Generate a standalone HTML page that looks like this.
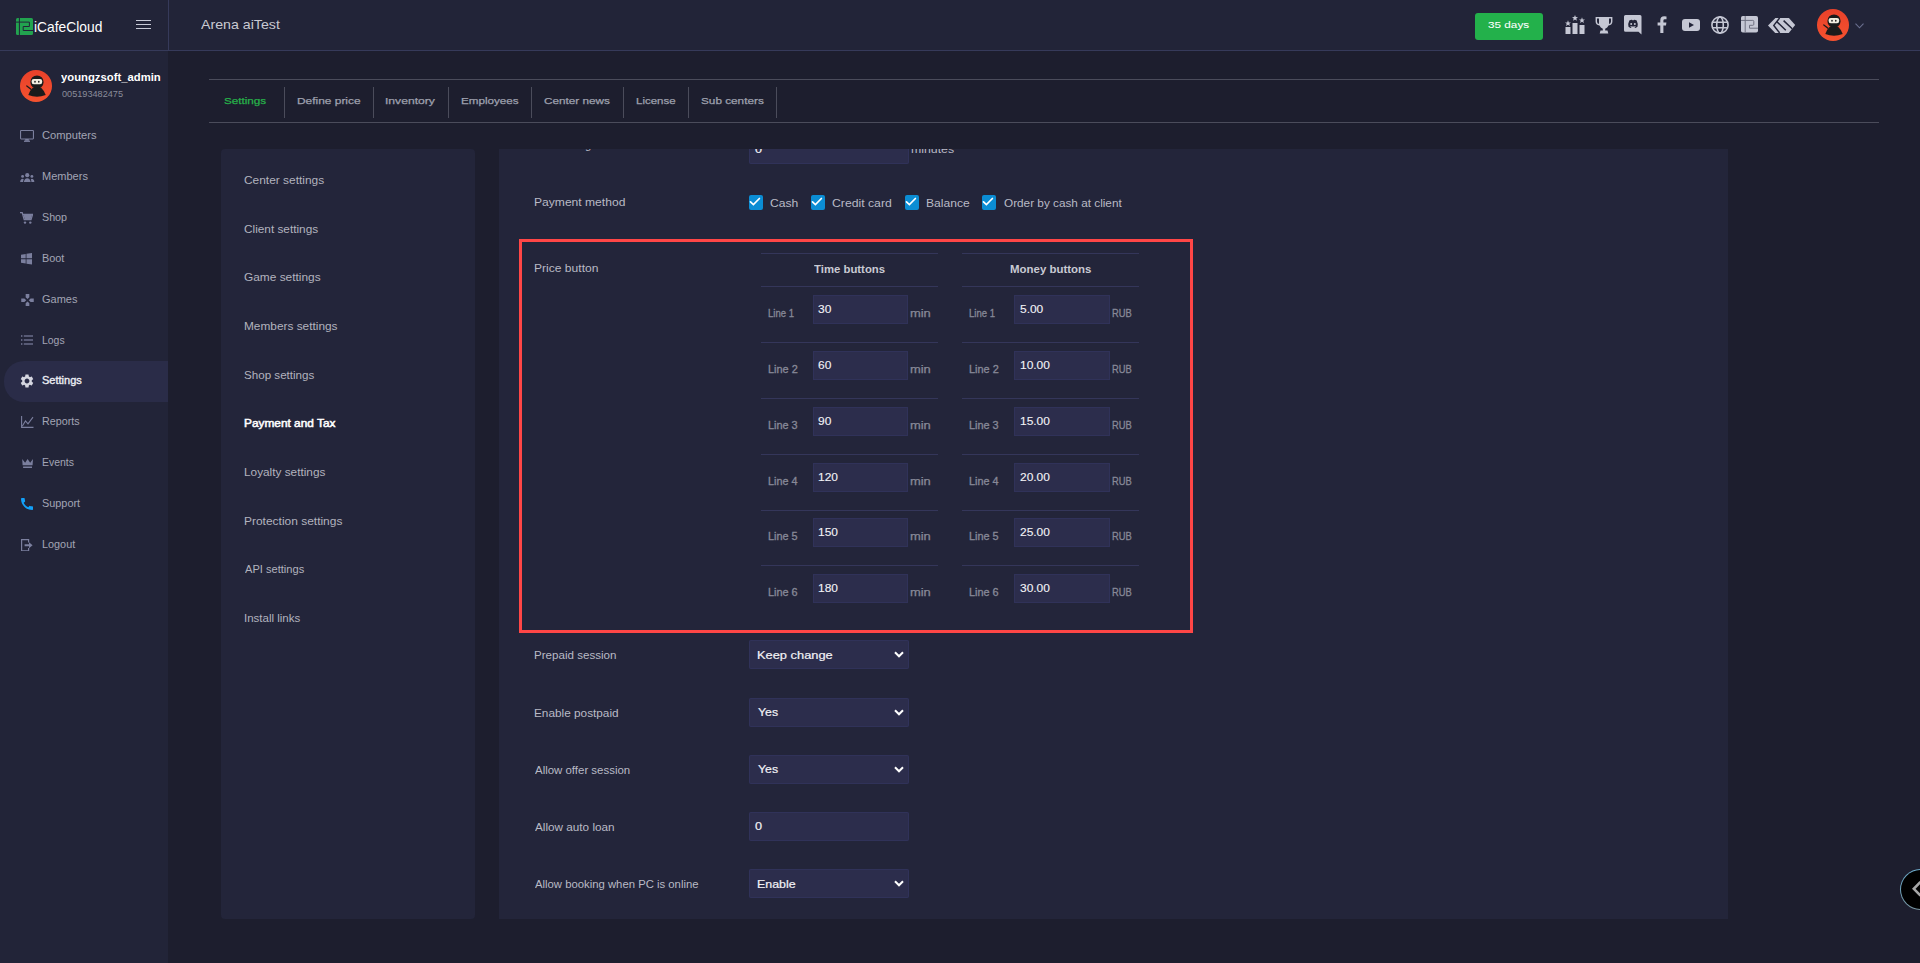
<!DOCTYPE html>
<html><head><meta charset="utf-8">
<style>
*{box-sizing:border-box;margin:0;padding:0}
html,body{width:1920px;height:963px;overflow:hidden}
body{background:#1d1e2e;font-family:"Liberation Sans",sans-serif;position:relative}
.a{position:absolute}
.t{position:absolute;white-space:nowrap;line-height:1}
.inp{position:absolute;background:#2c2d4c;border-radius:2px;box-shadow:inset 0 0 0 1px #303259}
.hl{position:absolute;height:1px;background:#34365a}
.cb{position:absolute;width:14px;height:15px;background:#0b8dd4;border-radius:2px}
</style></head><body>
<div class="a" style="left:0;top:0;width:1920px;height:50px;background:#222438"></div>
<div class="a" style="left:0;top:50px;width:1920px;height:1px;background:#363a5a"></div>
<div class="a" style="left:168px;top:0;width:1px;height:50px;background:#363a5a"></div>
<svg class="a" style="left:16px;top:18px" width="17" height="17" viewBox="0 0 17 17">
<rect x="0" y="0" width="17" height="17" rx="1.5" fill="#22a34f"/>
<path d="M3.4 0 V17" stroke="#222438" stroke-width="1"/>
<path d="M0 4.1 H13.4 V8.5 H7.2 V12.5 H17" stroke="#222438" stroke-width="1" fill="none"/>
</svg>
<div class="t" style="left:34.47px;top:20.00px;font-size:14.4px;color:#ffffff;font-weight:normal;transform:scaleX(0.9600);transform-origin:0 0;">iCafeCloud</div>
<div class="a" style="left:136px;top:19.5px;width:15px;height:1.7px;background:#c8cad6"></div>
<div class="a" style="left:136px;top:23.6px;width:15px;height:1.7px;background:#c8cad6"></div>
<div class="a" style="left:136px;top:27.6px;width:15px;height:1.7px;background:#c8cad6"></div>
<div class="t" style="left:201.16px;top:18.00px;font-size:13.4px;color:#c9cad2;font-weight:normal;transform:scaleX(1.0600);transform-origin:0 0;">Arena aiTest</div>
<div class="a" style="left:1475px;top:13px;width:68px;height:27px;background:#23b14b;border-radius:3px"></div>
<div class="t" style="left:1488.16px;top:20.00px;font-size:9.6px;color:#ffffff;font-weight:normal;transform:scaleX(1.2239);transform-origin:0 0;-webkit-text-stroke:0.05px #ffffff;">35 days</div>
<svg class="a" style="left:1565px;top:15px" width="20" height="19" viewBox="0 0 20 19"><rect x="0.5" y="12" width="5" height="7" fill="#c5c7d4"/><rect x="7.5" y="8" width="5" height="11" fill="#c5c7d4"/><rect x="14.5" y="10" width="5" height="9" fill="#c5c7d4"/><path d="M3 5.3 L3.8 7.4 L6 7.5 L4.3 8.8 L4.9 11 L3 9.8 L1.1 11 L1.7 8.8 L0 7.5 L2.2 7.4 Z" fill="#c5c7d4"/><path d="M10 0 L10.8 2.1 L13 2.2 L11.3 3.5 L11.9 5.7 L10 4.5 L8.1 5.7 L8.7 3.5 L7 2.2 L9.2 2.1 Z" fill="#c5c7d4"/><path d="M17 2.3 L17.8 4.4 L20 4.5 L18.3 5.8 L18.9 8 L17 6.8 L15.1 8 L15.7 5.8 L14 4.5 L16.2 4.4 Z" fill="#c5c7d4"/></svg>
<svg class="a" style="left:1595px;top:15.5px" width="18" height="18" viewBox="0 0 18 18"><path d="M0.6 1 H17.4 V5.5 Q17.4 9 13.5 9.6 Q12.5 12 10.2 12.7 V14.6 H12.5 L13.3 17.5 H4.7 L5.5 14.6 H7.8 V12.7 Q5.5 12 4.5 9.6 Q0.6 9 0.6 5.5 Z" fill="#c5c7d4"/><path d="M2 2.5 V5.5 Q2 7.5 4 8 V2.5 Z M16 2.5 V5.5 Q16 7.5 14 8 V2.5 Z" fill="#222438"/></svg>
<svg class="a" style="left:1624px;top:15px" width="18" height="20" viewBox="0 0 18 20"><path d="M1.5 0 H16 Q17.5 0 17.5 1.5 V19.5 L14.5 16.8 H1.5 Q0 16.8 0 15.3 V1.5 Q0 0 1.5 0 Z" fill="#c5c7d4"/><path d="M4.5 11.8 Q3.8 8.5 5.3 5.6 Q6.8 4.7 8 4.8 L8.3 5.3 Q9 5.1 9.7 5.3 L10 4.8 Q11.2 4.7 12.7 5.6 Q14.2 8.5 13.5 11.8 Q12.3 12.7 11.1 12.9 L10.5 12 Q11.3 11.7 11.8 11.3 L11.4 11 Q9 12 6.6 11 L6.2 11.3 Q6.7 11.7 7.5 12 L6.9 12.9 Q5.7 12.7 4.5 11.8 Z" fill="#222438"/><ellipse cx="7.2" cy="9" rx="1" ry="1.1" fill="#c5c7d4"/><ellipse cx="10.8" cy="9" rx="1" ry="1.1" fill="#c5c7d4"/></svg>
<svg class="a" style="left:1657px;top:16px" width="10" height="17" viewBox="0 0 10 17"><path d="M6.4 17 V9.4 H9 L9.4 6.4 H6.4 V4.6 Q6.4 3.2 7.8 3.2 H9.5 V0.4 Q8.6 0.2 7.2 0.2 Q3.3 0.2 3.3 4.2 V6.4 H0.6 V9.4 H3.3 V17 Z" fill="#c5c7d4"/></svg>
<svg class="a" style="left:1682px;top:18.5px" width="18" height="12" viewBox="0 0 18 12"><rect x="0" y="0" width="18" height="12" rx="3" fill="#c5c7d4"/><path d="M7 3.3 L12 6 L7 8.7 Z" fill="#222438"/></svg>
<svg class="a" style="left:1711px;top:15.5px" width="18" height="18" viewBox="0 0 18 18" fill="none" stroke="#c5c7d4" stroke-width="1.6"><circle cx="9" cy="9" r="8.1"/><ellipse cx="9" cy="9" rx="3.3" ry="8.1"/><path d="M1.2 6.3 H16.8 M1.2 11.7 H16.8"/></svg>
<svg class="a" style="left:1740.5px;top:16.4px" width="17" height="16.5" viewBox="0 0 17 16.5"><rect x="0" y="0" width="17" height="16.5" rx="1.8" fill="#c5c7d4"/><path d="M4.2 0 V16.5" stroke="#6e7080" stroke-width="1"/><path d="M0 4.4 H11.8 Q12.8 4.4 12.8 5.4 V8.3 Q12.8 9.3 11.8 9.3 H8.5 V12.2 H17" stroke="#6e7080" stroke-width="1" fill="none"/></svg>
<svg class="a" style="left:1768.4px;top:17.8px" width="27.5" height="15.4" viewBox="0 0 27.5 15.4"><path d="M0 7.5 L7.4 0 H20.9 L27.2 7 L20.6 15.2 H7.4 Z" fill="#c5c7d4"/><path d="M11.6 0 L5.8 7.4 L11.6 14.9 M8.8 3.6 L17.8 12.3 M15.6 2.6 L24.2 10.7" stroke="#222438" stroke-width="1.5" fill="none"/></svg>
<svg class="a" style="left:1817px;top:9px" width="32" height="32" viewBox="0 0 32 32">
<defs><linearGradient id="ng1817" x1="0" y1="0" x2="0" y2="1"><stop offset="0" stop-color="#e9412a"/><stop offset="1" stop-color="#f5522f"/></linearGradient></defs>
<circle cx="16" cy="16" r="16" fill="url(#ng1817)"/>
<path d="M8.3 25 Q9.8 20.2 13 17.4 L21 17.4 Q24 20.2 25.7 25 Q17 28.5 8.3 25 Z" fill="#1b1b1b"/>
<circle cx="17" cy="12" r="6.6" fill="#1b1b1b"/>
<rect x="11.6" y="8.9" width="10.6" height="5.4" rx="2.2" fill="#f3eee0"/>
<ellipse cx="15" cy="11.7" rx="0.8" ry="1" fill="#1b1b1b"/><ellipse cx="18.8" cy="11.7" rx="0.8" ry="1" fill="#1b1b1b"/>
<path d="M6.8 15.9 L11 19.3" stroke="#1b1b1b" stroke-width="1.3" stroke-linecap="round"/>
</svg>
<svg class="a" style="left:1855px;top:22.5px" width="9" height="6" viewBox="0 0 9 6"><path d="M0.5 0.7 L4.5 4.8 L8.5 0.7" stroke="#6b7090" stroke-width="1.1" fill="none"/></svg>
<div class="a" style="left:0;top:51px;width:168px;height:912px;background:#222438"></div>
<svg class="a" style="left:20px;top:70px" width="32" height="32" viewBox="0 0 32 32">
<defs><linearGradient id="ng20" x1="0" y1="0" x2="0" y2="1"><stop offset="0" stop-color="#e9412a"/><stop offset="1" stop-color="#f5522f"/></linearGradient></defs>
<circle cx="16" cy="16" r="16" fill="url(#ng20)"/>
<path d="M8.3 25 Q9.8 20.2 13 17.4 L21 17.4 Q24 20.2 25.7 25 Q17 28.5 8.3 25 Z" fill="#1b1b1b"/>
<circle cx="17" cy="12" r="6.6" fill="#1b1b1b"/>
<rect x="11.6" y="8.9" width="10.6" height="5.4" rx="2.2" fill="#f3eee0"/>
<ellipse cx="15" cy="11.7" rx="0.8" ry="1" fill="#1b1b1b"/><ellipse cx="18.8" cy="11.7" rx="0.8" ry="1" fill="#1b1b1b"/>
<path d="M6.8 15.9 L11 19.3" stroke="#1b1b1b" stroke-width="1.3" stroke-linecap="round"/>
</svg>
<div class="t" style="left:61.17px;top:72.00px;font-size:11.2px;color:#ffffff;font-weight:bold;transform:scaleX(1.0090);transform-origin:0 0;">youngzsoft_admin</div>
<div class="t" style="left:61.53px;top:89.00px;font-size:9.7px;color:#8a8c9a;font-weight:normal;transform:scaleX(0.9430);transform-origin:0 0;">005193482475</div>
<div class="a" style="left:4px;top:361px;width:164px;height:40.5px;background:#2a2c48;border-radius:20px 0 0 20px"></div>
<div class="t" style="left:42.34px;top:130.00px;font-size:10.5px;color:#a3a5b5;font-weight:normal;transform:scaleX(1.0624);transform-origin:0 0;">Computers</div>
<svg class="a" style="left:20px;top:130px" width="14" height="12" viewBox="0 0 14 12"><rect x="0.55" y="0.55" width="12.9" height="8.4" rx="0.6" stroke="#7b7f9e" stroke-width="1.1" fill="none"/><path d="M5.3 9 L5 10.7 H9 L8.7 9 Z" fill="#7b7f9e"/><rect x="4" y="10.6" width="6" height="1.3" fill="#7b7f9e"/></svg>
<div class="t" style="left:41.99px;top:171.00px;font-size:10.5px;color:#a3a5b5;font-weight:normal;transform:scaleX(1.0488);transform-origin:0 0;">Members</div>
<svg class="a" style="left:20px;top:172.5px" width="14.5" height="9.5" viewBox="0 0 15 10"><circle cx="7.5" cy="2.3" r="2.2" fill="#7b7f9e"/><circle cx="2.6" cy="3.6" r="1.5" fill="#7b7f9e"/><circle cx="12.4" cy="3.6" r="1.5" fill="#7b7f9e"/><path d="M3.9 9.8 Q4.4 5.6 7.5 5.5 Q10.6 5.6 11.1 9.8 Z" fill="#7b7f9e"/><path d="M0 9.8 Q0.2 6.3 2.6 6.1 Q3.4 6.1 3.8 6.5 Q3.2 7.8 3.1 9.8 Z" fill="#7b7f9e"/><path d="M15 9.8 Q14.8 6.3 12.4 6.1 Q11.6 6.1 11.2 6.5 Q11.8 7.8 11.9 9.8 Z" fill="#7b7f9e"/></svg>
<div class="t" style="left:42.42px;top:212.00px;font-size:10.5px;color:#a3a5b5;font-weight:normal;transform:scaleX(1.0201);transform-origin:0 0;">Shop</div>
<svg class="a" style="left:20px;top:211.5px" width="13" height="12" viewBox="0 0 13 12"><path d="M0 0.6 H2.2 L4.2 7.7 H11 L12.6 2.4 H3" stroke="#7b7f9e" stroke-width="1.3" fill="none"/><path d="M3.4 2.6 H12.2 L10.7 7 H4.6 Z" fill="#7b7f9e"/><circle cx="5" cy="10.6" r="1.2" fill="#7b7f9e"/><circle cx="10.3" cy="10.6" r="1.2" fill="#7b7f9e"/></svg>
<div class="t" style="left:42.00px;top:253.00px;font-size:10.5px;color:#a3a5b5;font-weight:normal;transform:scaleX(1.0359);transform-origin:0 0;">Boot</div>
<svg class="a" style="left:21px;top:253px" width="11.5" height="11.5" viewBox="0 0 12 12"><path d="M0 1.8 L4.9 1 V5.6 H0 Z M5.7 0.9 L11.5 0 V5.6 H5.7 Z M0 6.4 H4.9 V11 L0 10.2 Z M5.7 6.4 H11.5 V12 L5.7 11.1 Z" fill="#7b7f9e"/></svg>
<div class="t" style="left:42.35px;top:294.00px;font-size:10.5px;color:#a3a5b5;font-weight:normal;transform:scaleX(1.0472);transform-origin:0 0;">Games</div>
<svg class="a" style="left:20.5px;top:293.5px" width="13" height="12.5" viewBox="0 0 13 13"><path d="M4.6 0 H8.4 V3.3 L6.5 5.2 L4.6 3.3 Z M4.6 13 H8.4 V9.7 L6.5 7.8 L4.6 9.7 Z M0 4.6 V8.4 H3.3 L5.2 6.5 L3.3 4.6 Z M13 4.6 V8.4 H9.7 L7.8 6.5 L9.7 4.6 Z" fill="#7b7f9e"/></svg>
<div class="t" style="left:42.04px;top:335.00px;font-size:10.5px;color:#a3a5b5;font-weight:normal;transform:scaleX(0.9942);transform-origin:0 0;">Logs</div>
<svg class="a" style="left:21px;top:334.5px" width="12" height="10" viewBox="0 0 12 10"><rect x="0" y="0.3" width="1.4" height="1.4" fill="#7b7f9e"/><rect x="0" y="4.3" width="1.4" height="1.4" fill="#7b7f9e"/><rect x="0" y="8.3" width="1.4" height="1.4" fill="#7b7f9e"/><rect x="2.8" y="0.4" width="9.2" height="1.2" fill="#7b7f9e"/><rect x="2.8" y="4.4" width="9.2" height="1.2" fill="#7b7f9e"/><rect x="2.8" y="8.4" width="9.2" height="1.2" fill="#7b7f9e"/></svg>
<div class="t" style="left:42.40px;top:375.00px;font-size:10.5px;color:#ecedf3;font-weight:normal;transform:scaleX(1.0488);transform-origin:0 0;-webkit-text-stroke:0.35px #ecedf3;">Settings</div>
<svg class="a" style="left:19px;top:373px" width="16" height="16" viewBox="0 0 24 24"><path fill="#d5d6e0" d="M19.14 12.94c.04-.3.06-.61.06-.94 0-.32-.02-.64-.07-.94l2.03-1.58a.49.49 0 0 0 .12-.61l-1.920-3.32a.488.488 0 0 0-.59-.22l-2.39.96c-.5-.38-1.03-.7-1.62-.94l-.36-2.54a.484.484 0 0 0-.48-.41h-3.84c-.24 0-.43.17-.47.41l-.36 2.54c-.59.24-1.13.57-1.62.94l-2.39-.96c-.22-.08-.47 0-.59.22L2.74 8.87c-.12.21-.08.47.12.61l2.03 1.58c-.05.3-.09.63-.09.94s.02.64.07.94l-2.03 1.58a.49.49 0 0 0-.12.61l1.92 3.32c.12.22.37.29.59.22l2.39-.96c.5.38 1.03.7 1.62.94l.36 2.54c.05.24.24.41.48.41h3.84c.24 0 .44-.17.47-.41l.36-2.54c.59-.24 1.13-.56 1.62-.94l2.39.96c.22.08.47 0 .59-.22l1.920-3.32c.12-.22.07-.47-.12-.61l-2.01-1.58zM12 15.6c-1.98 0-3.6-1.62-3.6-3.6s1.62-3.6 3.6-3.6 3.6 1.62 3.6 3.6-1.62 3.6-3.6 3.6z"/></svg>
<div class="t" style="left:42.02px;top:416.00px;font-size:10.5px;color:#a3a5b5;font-weight:normal;transform:scaleX(1.0213);transform-origin:0 0;">Reports</div>
<svg class="a" style="left:20.5px;top:415.5px" width="13" height="12" viewBox="0 0 13 12"><path d="M0.6 0 V11.4 H12.5" stroke="#7b7f9e" stroke-width="1.1" fill="none"/><path d="M1.2 10.2 L4.5 5 L7 7.8 L12 1.2" stroke="#7b7f9e" stroke-width="1.1" fill="none"/></svg>
<div class="t" style="left:42.04px;top:457.00px;font-size:10.5px;color:#a3a5b5;font-weight:normal;transform:scaleX(0.9945);transform-origin:0 0;">Events</div>
<svg class="a" style="left:21.5px;top:458.5px" width="11.2" height="9.5" viewBox="0 0 11.2 9.5"><path d="M0.2 0 L3.1 3.7 L5.6 0 L8.2 3.7 L11 0 L10.6 6.3 H0.6 Z" fill="#7b7f9e"/><rect x="1.1" y="7.5" width="8.9" height="1.6" fill="#7b7f9e"/></svg>
<div class="t" style="left:42.41px;top:498.00px;font-size:10.5px;color:#a3a5b5;font-weight:normal;transform:scaleX(1.0352);transform-origin:0 0;">Support</div>
<svg class="a" style="left:19px;top:496px" width="16" height="16" viewBox="0 0 24 24"><path fill="#12a0f8" d="M20.01 15.38c-1.23 0-2.42-.2-3.53-.56a.977.977 0 0 0-1.010.24l-1.57 1.97c-2.83-1.35-5.48-3.9-6.89-6.83l1.95-1.66c.27-.28.35-.67.24-1.02-.37-1.11-.56-2.3-.56-3.53 0-.54-.45-.99-.99-.99H4.19C3.65 3 3 3.24 3 3.99 3 13.28 10.73 21 20.01 21c.71 0 .99-.63.99-1.18v-3.45c0-.54-.45-.99-.99-.99z"/></svg>
<div class="t" style="left:42.00px;top:539.00px;font-size:10.5px;color:#a3a5b5;font-weight:normal;transform:scaleX(1.0334);transform-origin:0 0;">Logout</div>
<svg class="a" style="left:21px;top:538.5px" width="12" height="12.5" viewBox="0 0 12 12.5"><path d="M7.6 3.6 V0.6 H0.6 V11.9 H7.6 V8.9" stroke="#7b7f9e" stroke-width="1.2" fill="none"/><path d="M3.6 5.3 H8 V3.2 L11.6 6.25 L8 9.3 V7.2 H3.6 Z" fill="#7b7f9e"/></svg>
<div class="a" style="left:209px;top:79px;width:1670px;height:1px;background:#4b4c5b"></div>
<div class="a" style="left:209px;top:122px;width:1670px;height:1px;background:#4b4c5b"></div>
<div class="t" style="left:224.28px;top:96.00px;font-size:9.8px;color:#27b14a;font-weight:normal;transform:scaleX(1.1901);transform-origin:0 0;-webkit-text-stroke:0.25px #27b14a;">Settings</div>
<div class="t" style="left:296.52px;top:96.00px;font-size:9.8px;color:#9fa1ae;font-weight:normal;transform:scaleX(1.2163);transform-origin:0 0;-webkit-text-stroke:0.25px #9fa1ae;">Define price</div>
<div class="t" style="left:385.13px;top:96.00px;font-size:9.8px;color:#9fa1ae;font-weight:normal;transform:scaleX(1.2382);transform-origin:0 0;-webkit-text-stroke:0.25px #9fa1ae;">Inventory</div>
<div class="t" style="left:460.64px;top:96.00px;font-size:9.8px;color:#9fa1ae;font-weight:normal;transform:scaleX(1.1873);transform-origin:0 0;-webkit-text-stroke:0.25px #9fa1ae;">Employees</div>
<div class="t" style="left:543.81px;top:96.00px;font-size:9.8px;color:#9fa1ae;font-weight:normal;transform:scaleX(1.1994);transform-origin:0 0;-webkit-text-stroke:0.25px #9fa1ae;">Center news</div>
<div class="t" style="left:635.65px;top:96.00px;font-size:9.8px;color:#9fa1ae;font-weight:normal;transform:scaleX(1.1710);transform-origin:0 0;-webkit-text-stroke:0.25px #9fa1ae;">License</div>
<div class="t" style="left:700.72px;top:96.00px;font-size:9.8px;color:#9fa1ae;font-weight:normal;transform:scaleX(1.2004);transform-origin:0 0;-webkit-text-stroke:0.25px #9fa1ae;">Sub centers</div>
<div class="a" style="left:284px;top:87px;width:1px;height:31px;background:#4b4c5b"></div>
<div class="a" style="left:373px;top:87px;width:1px;height:31px;background:#4b4c5b"></div>
<div class="a" style="left:448px;top:87px;width:1px;height:31px;background:#4b4c5b"></div>
<div class="a" style="left:531px;top:87px;width:1px;height:31px;background:#4b4c5b"></div>
<div class="a" style="left:623px;top:87px;width:1px;height:31px;background:#4b4c5b"></div>
<div class="a" style="left:688px;top:87px;width:1px;height:31px;background:#4b4c5b"></div>
<div class="a" style="left:776px;top:87px;width:1px;height:31px;background:#4b4c5b"></div>
<div class="a" style="left:221px;top:149px;width:254px;height:770px;background:#23253a;border-radius:4px"></div>
<div class="a" style="left:499px;top:149px;width:1229px;height:770px;background:#23253a"></div>
<div class="t" style="left:244.40px;top:175.00px;font-size:10.75px;color:#b2b3be;font-weight:normal;transform:scaleX(1.1082);transform-origin:0 0;">Center settings</div>
<div class="t" style="left:244.41px;top:224.00px;font-size:10.75px;color:#b2b3be;font-weight:normal;transform:scaleX(1.0977);transform-origin:0 0;">Client settings</div>
<div class="t" style="left:244.41px;top:272.00px;font-size:10.75px;color:#b2b3be;font-weight:normal;transform:scaleX(1.1053);transform-origin:0 0;">Game settings</div>
<div class="t" style="left:244.02px;top:321.00px;font-size:10.75px;color:#b2b3be;font-weight:normal;transform:scaleX(1.1019);transform-origin:0 0;">Members settings</div>
<div class="t" style="left:244.48px;top:370.00px;font-size:10.75px;color:#b2b3be;font-weight:normal;transform:scaleX(1.0796);transform-origin:0 0;">Shop settings</div>
<div class="t" style="left:244.02px;top:418.00px;font-size:10.75px;color:#ffffff;font-weight:normal;transform:scaleX(1.1031);transform-origin:0 0;-webkit-text-stroke:0.5px #ffffff;">Payment and Tax</div>
<div class="t" style="left:244.03px;top:467.00px;font-size:10.75px;color:#b2b3be;font-weight:normal;transform:scaleX(1.0984);transform-origin:0 0;">Loyalty settings</div>
<div class="t" style="left:244.01px;top:516.00px;font-size:10.75px;color:#b2b3be;font-weight:normal;transform:scaleX(1.1126);transform-origin:0 0;">Protection settings</div>
<div class="t" style="left:244.97px;top:564.00px;font-size:10.75px;color:#b2b3be;font-weight:normal;transform:scaleX(1.0325);transform-origin:0 0;">API settings</div>
<div class="t" style="left:243.94px;top:613.00px;font-size:10.75px;color:#b2b3be;font-weight:normal;transform:scaleX(1.0704);transform-origin:0 0;">Install links</div>
<div class="a" style="left:0px;top:149px;width:1728px;height:20px;overflow:hidden">
<div class="inp" style="left:749px;top:-14.5px;width:160px;height:29px"></div>
<div class="t" style="left:754.69px;top:-5.00px;font-size:11.3px;color:#f2f2f6;font-weight:normal;transform:scaleX(1.1200);transform-origin:0 0;-webkit-text-stroke:0.2px #f2f2f6;">0</div>
<div class="t" style="left:910.87px;top:-4.00px;font-size:10.2px;color:#b9bac5;font-weight:normal;transform:scaleX(1.2082);transform-origin:0 0;">minutes</div>
<div class="t" style="left:584.52px;top:-8.00px;font-size:10.2px;color:#b9bac5;font-weight:normal;transform:scaleX(1.1000);transform-origin:0 0;">g</div>
</div>
<div class="t" style="left:534.40px;top:198.00px;font-size:10.3px;color:#b9bac5;font-weight:normal;transform:scaleX(1.1736);transform-origin:0 0;">Payment method</div>
<div class="cb" style="left:749px;top:195px"></div>
<svg class="a" style="left:749px;top:195px" width="14" height="15" viewBox="0 0 14 15"><path d="M1.5 6.9 L4.4 9.6 L10.4 3.5" stroke="#fff" stroke-width="1.7" fill="none" stroke-linecap="round"/></svg>
<div class="t" style="left:770.39px;top:198.00px;font-size:10.6px;color:#b9bac5;font-weight:normal;transform:scaleX(1.1431);transform-origin:0 0;">Cash</div>
<div class="cb" style="left:811px;top:195px"></div>
<svg class="a" style="left:811px;top:195px" width="14" height="15" viewBox="0 0 14 15"><path d="M1.5 6.9 L4.4 9.6 L10.4 3.5" stroke="#fff" stroke-width="1.7" fill="none" stroke-linecap="round"/></svg>
<div class="t" style="left:832.29px;top:198.00px;font-size:10.6px;color:#b9bac5;font-weight:normal;transform:scaleX(1.1532);transform-origin:0 0;">Credit card</div>
<div class="cb" style="left:905px;top:195px"></div>
<svg class="a" style="left:905px;top:195px" width="14" height="15" viewBox="0 0 14 15"><path d="M1.5 6.9 L4.4 9.6 L10.4 3.5" stroke="#fff" stroke-width="1.7" fill="none" stroke-linecap="round"/></svg>
<div class="t" style="left:925.90px;top:198.00px;font-size:10.6px;color:#b9bac5;font-weight:normal;transform:scaleX(1.1415);transform-origin:0 0;">Balance</div>
<div class="cb" style="left:982px;top:195px"></div>
<svg class="a" style="left:982px;top:195px" width="14" height="15" viewBox="0 0 14 15"><path d="M1.5 6.9 L4.4 9.6 L10.4 3.5" stroke="#fff" stroke-width="1.7" fill="none" stroke-linecap="round"/></svg>
<div class="t" style="left:1004.19px;top:198.00px;font-size:10.6px;color:#b9bac5;font-weight:normal;transform:scaleX(1.1107);transform-origin:0 0;">Order by cash at client</div>
<div class="a" style="left:519px;top:239px;width:674px;height:394px;border:3px solid #ff4646"></div>
<div class="t" style="left:534.30px;top:264.00px;font-size:10.4px;color:#b9bac5;font-weight:normal;transform:scaleX(1.1616);transform-origin:0 0;">Price button</div>
<div class="hl" style="left:761px;top:253px;width:177px"></div>
<div class="t" style="left:813.79px;top:264.00px;font-size:11.0px;color:#c9cad3;font-weight:bold;transform:scaleX(1.0325);transform-origin:0 0;">Time buttons</div>
<div class="hl" style="left:761px;top:286px;width:177px"></div>
<div class="inp" style="left:813px;top:295px;width:95px;height:29px;border-radius:0"></div>
<div class="t" style="left:767.81px;top:309.00px;font-size:10.2px;color:#878998;font-weight:normal;transform:scaleX(0.9341);transform-origin:0 0;-webkit-text-stroke:0.3px #878998;">Line 1</div>
<div class="t" style="left:818.45px;top:303.00px;font-size:11.6px;color:#f2f2f6;font-weight:normal;transform:scaleX(1.0300);transform-origin:0 0;-webkit-text-stroke:0.12px #f2f2f6;">30</div>
<div class="t" style="left:909.93px;top:308.00px;font-size:11.3px;color:#878998;font-weight:normal;transform:scaleX(1.1421);transform-origin:0 0;-webkit-text-stroke:0.25px #878998;">min</div>
<div class="hl" style="left:761px;top:342px;width:177px"></div>
<div class="inp" style="left:813px;top:351px;width:95px;height:29px;border-radius:0"></div>
<div class="t" style="left:767.70px;top:365.00px;font-size:10.2px;color:#878998;font-weight:normal;transform:scaleX(1.0712);transform-origin:0 0;-webkit-text-stroke:0.3px #878998;">Line 2</div>
<div class="t" style="left:818.30px;top:359.00px;font-size:11.6px;color:#f2f2f6;font-weight:normal;transform:scaleX(1.0300);transform-origin:0 0;-webkit-text-stroke:0.12px #f2f2f6;">60</div>
<div class="t" style="left:909.93px;top:364.00px;font-size:11.3px;color:#878998;font-weight:normal;transform:scaleX(1.1421);transform-origin:0 0;-webkit-text-stroke:0.25px #878998;">min</div>
<div class="hl" style="left:761px;top:398px;width:177px"></div>
<div class="inp" style="left:813px;top:407px;width:95px;height:29px;border-radius:0"></div>
<div class="t" style="left:767.70px;top:421.00px;font-size:10.2px;color:#878998;font-weight:normal;transform:scaleX(1.0681);transform-origin:0 0;-webkit-text-stroke:0.3px #878998;">Line 3</div>
<div class="t" style="left:818.33px;top:415.00px;font-size:11.6px;color:#f2f2f6;font-weight:normal;transform:scaleX(1.0300);transform-origin:0 0;-webkit-text-stroke:0.12px #f2f2f6;">90</div>
<div class="t" style="left:909.93px;top:420.00px;font-size:11.3px;color:#878998;font-weight:normal;transform:scaleX(1.1421);transform-origin:0 0;-webkit-text-stroke:0.25px #878998;">min</div>
<div class="hl" style="left:761px;top:454px;width:177px"></div>
<div class="inp" style="left:813px;top:463px;width:95px;height:29px;border-radius:0"></div>
<div class="t" style="left:767.71px;top:477.00px;font-size:10.2px;color:#878998;font-weight:normal;transform:scaleX(1.0620);transform-origin:0 0;-webkit-text-stroke:0.3px #878998;">Line 4</div>
<div class="t" style="left:818.00px;top:471.00px;font-size:11.6px;color:#f2f2f6;font-weight:normal;transform:scaleX(1.0300);transform-origin:0 0;-webkit-text-stroke:0.12px #f2f2f6;">120</div>
<div class="t" style="left:909.93px;top:476.00px;font-size:11.3px;color:#878998;font-weight:normal;transform:scaleX(1.1421);transform-origin:0 0;-webkit-text-stroke:0.25px #878998;">min</div>
<div class="hl" style="left:761px;top:510px;width:177px"></div>
<div class="inp" style="left:813px;top:518px;width:95px;height:29px;border-radius:0"></div>
<div class="t" style="left:767.70px;top:532.00px;font-size:10.2px;color:#878998;font-weight:normal;transform:scaleX(1.0671);transform-origin:0 0;-webkit-text-stroke:0.3px #878998;">Line 5</div>
<div class="t" style="left:818.00px;top:526.00px;font-size:11.6px;color:#f2f2f6;font-weight:normal;transform:scaleX(1.0300);transform-origin:0 0;-webkit-text-stroke:0.12px #f2f2f6;">150</div>
<div class="t" style="left:909.93px;top:531.00px;font-size:11.3px;color:#878998;font-weight:normal;transform:scaleX(1.1421);transform-origin:0 0;-webkit-text-stroke:0.25px #878998;">min</div>
<div class="hl" style="left:761px;top:565px;width:177px"></div>
<div class="inp" style="left:813px;top:574px;width:95px;height:29px;border-radius:0"></div>
<div class="t" style="left:767.70px;top:588.00px;font-size:10.2px;color:#878998;font-weight:normal;transform:scaleX(1.0681);transform-origin:0 0;-webkit-text-stroke:0.3px #878998;">Line 6</div>
<div class="t" style="left:818.00px;top:582.00px;font-size:11.6px;color:#f2f2f6;font-weight:normal;transform:scaleX(1.0300);transform-origin:0 0;-webkit-text-stroke:0.12px #f2f2f6;">180</div>
<div class="t" style="left:909.93px;top:587.00px;font-size:11.3px;color:#878998;font-weight:normal;transform:scaleX(1.1421);transform-origin:0 0;-webkit-text-stroke:0.25px #878998;">min</div>
<div class="hl" style="left:962px;top:253px;width:177px"></div>
<div class="t" style="left:1009.63px;top:264.00px;font-size:11.0px;color:#c9cad3;font-weight:bold;transform:scaleX(1.0412);transform-origin:0 0;">Money buttons</div>
<div class="hl" style="left:962px;top:286px;width:177px"></div>
<div class="inp" style="left:1014px;top:295px;width:96px;height:29px;border-radius:0"></div>
<div class="t" style="left:968.81px;top:309.00px;font-size:10.2px;color:#878998;font-weight:normal;transform:scaleX(0.9341);transform-origin:0 0;-webkit-text-stroke:0.3px #878998;">Line 1</div>
<div class="t" style="left:1020.22px;top:303.00px;font-size:11.6px;color:#f2f2f6;font-weight:normal;transform:scaleX(1.0300);transform-origin:0 0;-webkit-text-stroke:0.12px #f2f2f6;">5.00</div>
<div class="t" style="left:1112.03px;top:309.00px;font-size:10.3px;color:#878998;font-weight:normal;transform:scaleX(0.9058);transform-origin:0 0;-webkit-text-stroke:0.3px #878998;">RUB</div>
<div class="hl" style="left:962px;top:342px;width:177px"></div>
<div class="inp" style="left:1014px;top:351px;width:96px;height:29px;border-radius:0"></div>
<div class="t" style="left:968.70px;top:365.00px;font-size:10.2px;color:#878998;font-weight:normal;transform:scaleX(1.0712);transform-origin:0 0;-webkit-text-stroke:0.3px #878998;">Line 2</div>
<div class="t" style="left:1019.80px;top:359.00px;font-size:11.6px;color:#f2f2f6;font-weight:normal;transform:scaleX(1.0300);transform-origin:0 0;-webkit-text-stroke:0.12px #f2f2f6;">10.00</div>
<div class="t" style="left:1112.03px;top:365.00px;font-size:10.3px;color:#878998;font-weight:normal;transform:scaleX(0.9058);transform-origin:0 0;-webkit-text-stroke:0.3px #878998;">RUB</div>
<div class="hl" style="left:962px;top:398px;width:177px"></div>
<div class="inp" style="left:1014px;top:407px;width:96px;height:29px;border-radius:0"></div>
<div class="t" style="left:968.70px;top:421.00px;font-size:10.2px;color:#878998;font-weight:normal;transform:scaleX(1.0681);transform-origin:0 0;-webkit-text-stroke:0.3px #878998;">Line 3</div>
<div class="t" style="left:1019.80px;top:415.00px;font-size:11.6px;color:#f2f2f6;font-weight:normal;transform:scaleX(1.0300);transform-origin:0 0;-webkit-text-stroke:0.12px #f2f2f6;">15.00</div>
<div class="t" style="left:1112.03px;top:421.00px;font-size:10.3px;color:#878998;font-weight:normal;transform:scaleX(0.9058);transform-origin:0 0;-webkit-text-stroke:0.3px #878998;">RUB</div>
<div class="hl" style="left:962px;top:454px;width:177px"></div>
<div class="inp" style="left:1014px;top:463px;width:96px;height:29px;border-radius:0"></div>
<div class="t" style="left:968.71px;top:477.00px;font-size:10.2px;color:#878998;font-weight:normal;transform:scaleX(1.0620);transform-origin:0 0;-webkit-text-stroke:0.3px #878998;">Line 4</div>
<div class="t" style="left:1020.10px;top:471.00px;font-size:11.6px;color:#f2f2f6;font-weight:normal;transform:scaleX(1.0300);transform-origin:0 0;-webkit-text-stroke:0.12px #f2f2f6;">20.00</div>
<div class="t" style="left:1112.03px;top:477.00px;font-size:10.3px;color:#878998;font-weight:normal;transform:scaleX(0.9058);transform-origin:0 0;-webkit-text-stroke:0.3px #878998;">RUB</div>
<div class="hl" style="left:962px;top:510px;width:177px"></div>
<div class="inp" style="left:1014px;top:518px;width:96px;height:29px;border-radius:0"></div>
<div class="t" style="left:968.70px;top:532.00px;font-size:10.2px;color:#878998;font-weight:normal;transform:scaleX(1.0671);transform-origin:0 0;-webkit-text-stroke:0.3px #878998;">Line 5</div>
<div class="t" style="left:1020.10px;top:526.00px;font-size:11.6px;color:#f2f2f6;font-weight:normal;transform:scaleX(1.0300);transform-origin:0 0;-webkit-text-stroke:0.12px #f2f2f6;">25.00</div>
<div class="t" style="left:1112.03px;top:532.00px;font-size:10.3px;color:#878998;font-weight:normal;transform:scaleX(0.9058);transform-origin:0 0;-webkit-text-stroke:0.3px #878998;">RUB</div>
<div class="hl" style="left:962px;top:565px;width:177px"></div>
<div class="inp" style="left:1014px;top:574px;width:96px;height:29px;border-radius:0"></div>
<div class="t" style="left:968.70px;top:588.00px;font-size:10.2px;color:#878998;font-weight:normal;transform:scaleX(1.0681);transform-origin:0 0;-webkit-text-stroke:0.3px #878998;">Line 6</div>
<div class="t" style="left:1020.25px;top:582.00px;font-size:11.6px;color:#f2f2f6;font-weight:normal;transform:scaleX(1.0300);transform-origin:0 0;-webkit-text-stroke:0.12px #f2f2f6;">30.00</div>
<div class="t" style="left:1112.03px;top:588.00px;font-size:10.3px;color:#878998;font-weight:normal;transform:scaleX(0.9058);transform-origin:0 0;-webkit-text-stroke:0.3px #878998;">RUB</div>
<div class="t" style="left:534.34px;top:651.00px;font-size:10.2px;color:#b9bac5;font-weight:normal;transform:scaleX(1.1379);transform-origin:0 0;">Prepaid session</div>
<div class="inp" style="left:749px;top:640px;width:160px;height:29px"></div>
<div class="t" style="left:756.84px;top:650.00px;font-size:11.3px;color:#f2f2f6;font-weight:normal;transform:scaleX(1.1370);transform-origin:0 0;-webkit-text-stroke:0.2px #f2f2f6;">Keep change</div>
<svg class="a" style="left:894px;top:651px" width="10" height="7" viewBox="0 0 10 7"><path d="M1 1.2 L5 5.3 L9 1.2" stroke="#fff" stroke-width="2" fill="none"/></svg>
<div class="t" style="left:534.33px;top:709.00px;font-size:10.2px;color:#b9bac5;font-weight:normal;transform:scaleX(1.1579);transform-origin:0 0;">Enable postpaid</div>
<div class="inp" style="left:749px;top:697.5px;width:160px;height:29px"></div>
<div class="t" style="left:757.62px;top:707.00px;font-size:11.3px;color:#f2f2f6;font-weight:normal;transform:scaleX(1.0900);transform-origin:0 0;-webkit-text-stroke:0.2px #f2f2f6;">Yes</div>
<svg class="a" style="left:894px;top:708.5px" width="10" height="7" viewBox="0 0 10 7"><path d="M1 1.2 L5 5.3 L9 1.2" stroke="#fff" stroke-width="2" fill="none"/></svg>
<div class="t" style="left:535.27px;top:766.00px;font-size:10.2px;color:#b9bac5;font-weight:normal;transform:scaleX(1.1227);transform-origin:0 0;">Allow offer session</div>
<div class="inp" style="left:749px;top:755px;width:160px;height:29px"></div>
<div class="t" style="left:757.62px;top:764.00px;font-size:11.3px;color:#f2f2f6;font-weight:normal;transform:scaleX(1.0900);transform-origin:0 0;-webkit-text-stroke:0.2px #f2f2f6;">Yes</div>
<svg class="a" style="left:894px;top:766px" width="10" height="7" viewBox="0 0 10 7"><path d="M1 1.2 L5 5.3 L9 1.2" stroke="#fff" stroke-width="2" fill="none"/></svg>
<div class="t" style="left:535.27px;top:823.00px;font-size:10.2px;color:#b9bac5;font-weight:normal;transform:scaleX(1.1515);transform-origin:0 0;">Allow auto loan</div>
<div class="inp" style="left:749px;top:812px;width:160px;height:29px"></div>
<div class="t" style="left:754.69px;top:821.00px;font-size:11.3px;color:#f2f2f6;font-weight:normal;transform:scaleX(1.1200);transform-origin:0 0;-webkit-text-stroke:0.2px #f2f2f6;">0</div>
<div class="t" style="left:535.27px;top:880.00px;font-size:10.2px;color:#b9bac5;font-weight:normal;transform:scaleX(1.1105);transform-origin:0 0;">Allow booking when PC is online</div>
<div class="inp" style="left:749px;top:869px;width:160px;height:29px"></div>
<div class="t" style="left:756.88px;top:879.00px;font-size:11.3px;color:#f2f2f6;font-weight:normal;transform:scaleX(1.0990);transform-origin:0 0;-webkit-text-stroke:0.2px #f2f2f6;">Enable</div>
<svg class="a" style="left:894px;top:880px" width="10" height="7" viewBox="0 0 10 7"><path d="M1 1.2 L5 5.3 L9 1.2" stroke="#fff" stroke-width="2" fill="none"/></svg>
<div class="a" style="left:1899.5px;top:868.5px;width:41px;height:41px;border-radius:50%;background:linear-gradient(160deg,#6aaed0,#7b8f95);"></div>
<div class="a" style="left:1900.5px;top:869.5px;width:39px;height:39px;border-radius:50%;background:#000"></div>
<svg class="a" style="left:1912px;top:881px" width="9" height="16" viewBox="0 0 9 16"><path d="M8.5 1 L1.8 7.8 L8.5 14.6" stroke="#a6a6a6" stroke-width="2.6" fill="none"/></svg>
</body></html>
